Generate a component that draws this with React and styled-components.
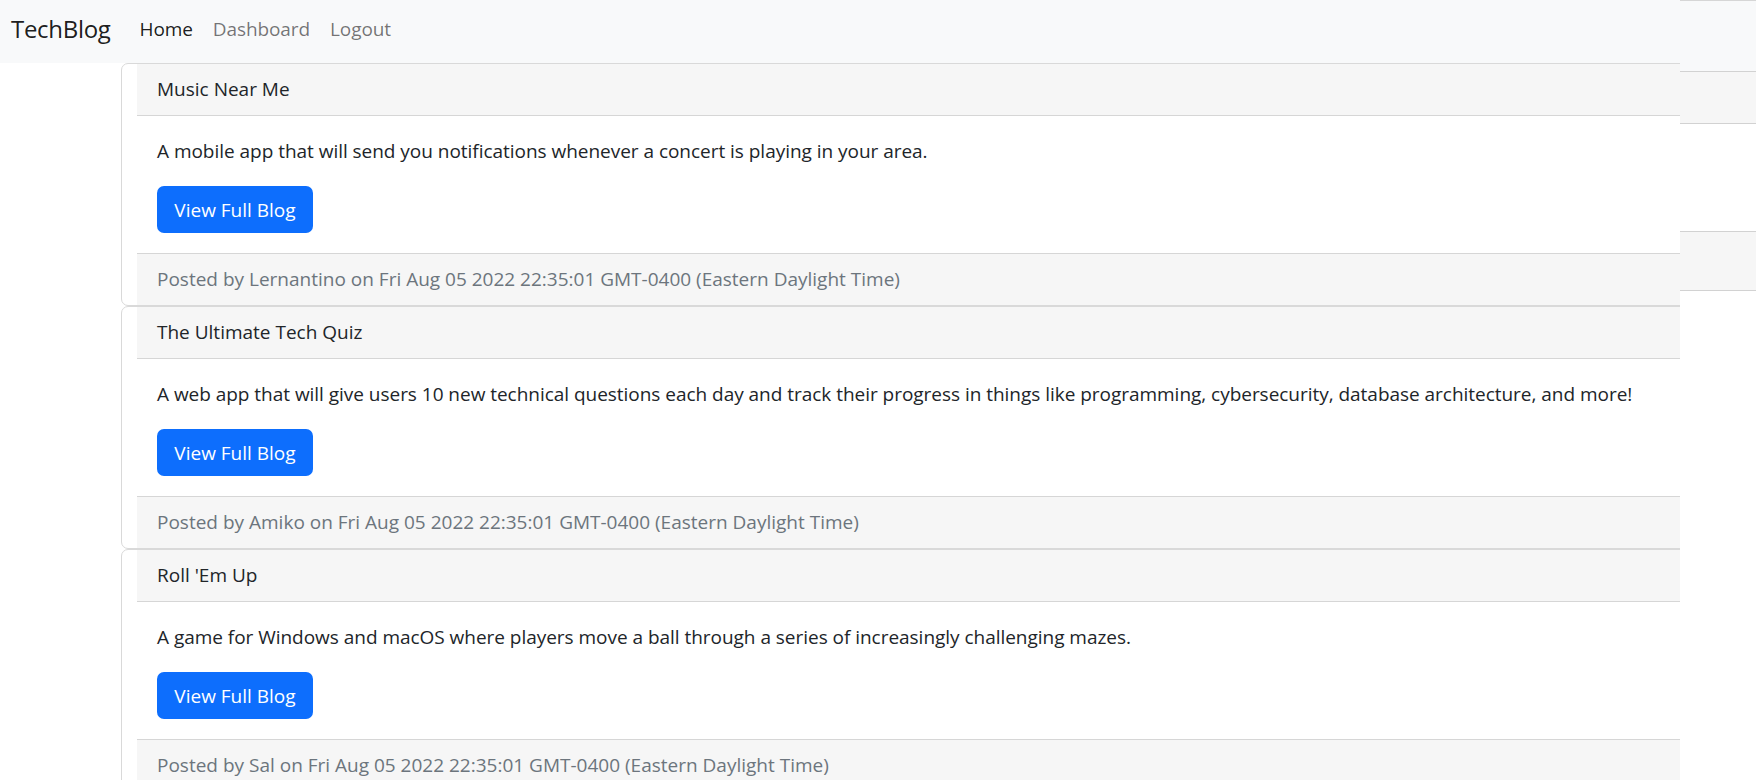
import React from "react";
import styled, { createGlobalStyle } from "styled-components";

const GlobalStyle = createGlobalStyle`
  html, body { margin: 0; padding: 0; background: #fff; }
  body {
    font-family: "Open Sans", "Noto Sans", "Liberation Sans", sans-serif;
    color: #212529;
    -webkit-font-smoothing: antialiased;
  }
  * { box-sizing: border-box; }
`;

const Page = styled.div`
  display: flex;
  width: 1756px;
  height: 780px;
  overflow: hidden;
`;

const Main = styled.div`
  width: 1680px;
  flex: none;
  overflow: hidden;
`;

const Navbar = styled.nav`
  height: 63px;
  background: #f8f9fa;
  display: flex;
  align-items: center;
  padding-left: 11px;
  padding-bottom: 5px;
`;

const Brand = styled.a`
  font-size: 24px;
  line-height: 30px;
  color: rgba(0, 0, 0, 0.9);
  text-decoration: none;
  margin-right: 19px;
  letter-spacing: -0.3px;
`;

const NavLink = styled.a`
  font-size: 19px;
  line-height: 30px;
  padding: 0 10px;
  text-decoration: none;
  letter-spacing: -0.1px;
  color: ${(p) => (p.$active ? "rgba(0,0,0,0.9)" : "rgba(0,0,0,0.55)")};
`;

const CardList = styled.div`
  display: flex;
  flex-direction: column;
  padding-left: 121px;
`;

const Card = styled.div`
  width: 1600px;
  border: 1px solid #d9d9d9;
  border-radius: 7px;
  background: #fff;
  padding-left: 15px;
  font-size: 19px;
`;

const CardHeader = styled.div`
  background: #f6f6f6;
  border-bottom: 1px solid #d6d6d6;
  padding: 10px 20px;
  line-height: 31px;
  color: #212529;
`;

const CardBody = styled.div`
  padding: 20px;
`;

const Text = styled.p`
  margin: 0 0 20px;
  line-height: 30px;
  color: #212529;
  letter-spacing: -0.03px;
`;

const Button = styled.button`
  height: 47px;
  width: 156px;
  padding: 0;
  border: none;
  border-radius: 7px;
  background: #0d6efd;
  color: #fff;
  font-family: inherit;
  font-size: 19px;
  line-height: 30px;
  cursor: pointer;
`;

const CardFooter = styled.div`
  background: #f6f6f6;
  border-top: 1px solid #d6d6d6;
  padding: 10px 20px;
  line-height: 31px;
  color: #6c757d;
`;

const Strip = styled.div`
  width: 76px;
  flex: none;
  display: flex;
  flex-direction: column;
  border-top: 1px solid #d6d6d6;
`;

const StripBlock = styled.div`
  height: ${(p) => p.$h}px;
  background: ${(p) => p.$bg};
  border-bottom: ${(p) => (p.$line ? "1px solid #d2d2d2" : "none")};
  flex: ${(p) => (p.$grow ? 1 : "none")};
`;

const posts = [
  {
    title: "Music Near Me",
    body: "A mobile app that will send you notifications whenever a concert is playing in your area.",
    author: "Lernantino",
  },
  {
    title: "The Ultimate Tech Quiz",
    body: "A web app that will give users 10 new technical questions each day and track their progress in things like programming, cybersecurity, database architecture, and more!",
    author: "Amiko",
  },
  {
    title: "Roll 'Em Up",
    body: "A game for Windows and macOS where players move a ball through a series of increasingly challenging mazes.",
    author: "Sal",
  },
];

export default function App() {
  return (
    <>
      <GlobalStyle />
      <Page>
        <Main>
          <Navbar>
            <Brand href="#">TechBlog</Brand>
            <NavLink href="#" $active>Home</NavLink>
            <NavLink href="#">Dashboard</NavLink>
            <NavLink href="#">Logout</NavLink>
          </Navbar>
          <CardList>
            {posts.map((p) => (
              <Card key={p.title}>
                <CardHeader>{p.title}</CardHeader>
                <CardBody>
                  <Text>{p.body}</Text>
                  <Button>View Full Blog</Button>
                </CardBody>
                <CardFooter>
                  Posted by {p.author} on Fri Aug 05 2022 22:35:01 GMT-0400 (Eastern Daylight Time)
                </CardFooter>
              </Card>
            ))}
          </CardList>
        </Main>
        <Strip>
          <StripBlock $h={71} $bg="#f8f9fa" $line />
          <StripBlock $h={52} $bg="#f6f6f6" $line />
          <StripBlock $h={108} $bg="#fff" $line />
          <StripBlock $h={59} $bg="#f6f6f6" $line />
          <StripBlock $grow $bg="#fff" />
        </Strip>
      </Page>
    </>
  );
}
